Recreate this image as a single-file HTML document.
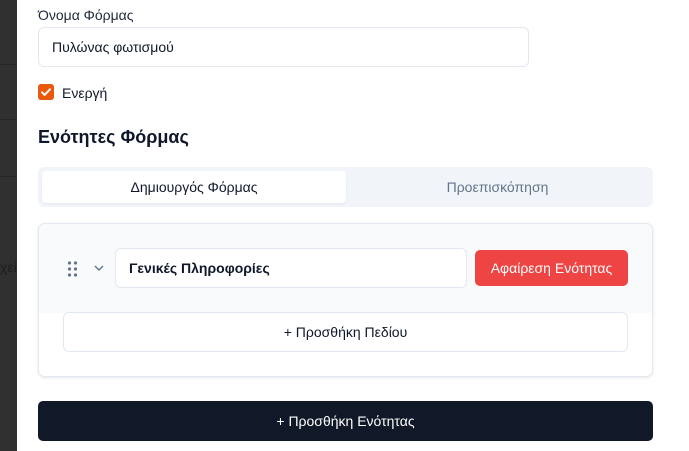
<!DOCTYPE html>
<html><head><meta charset="utf-8"><style>
*{box-sizing:border-box;margin:0;padding:0}
body{width:689px;height:451px;overflow:hidden;background:#fff;font-family:"Liberation Sans","DejaVu Sans",sans-serif;color:#0f172a;position:relative}
.strip{position:absolute;left:0;top:0;width:17px;height:451px;background:#303030}
.strip i{position:absolute;left:0;width:17px;height:1px;background:#262626}
.a{position:absolute}
.inp{border:1px solid #e2e8f0;border-radius:6px;background:#fff;font-size:14px;display:flex;align-items:center}
</style></head><body>
<div class="strip"><i style="top:64px"></i><i style="top:119px"></i><i style="top:176px"></i></div>
<div class="a" style="left:0;top:259px;font-size:14px;color:#1e1e1e">χεί</div>
<div class="a" style="left:38px;top:7px;font-size:14px;color:#1e293b">Όνομα Φόρμας</div>
<div class="a inp" style="left:38px;top:27px;width:491px;height:40px;padding-left:13px">Πυλώνας φωτισμού</div>
<div class="a" style="left:38px;top:84px;width:16px;height:16px;background:#ea580c;border-radius:3px">
<svg width="16" height="16" viewBox="0 0 16 16"><path d="M4 8.3l2.6 2.6L12 5.3" fill="none" stroke="#fff" stroke-width="2" stroke-linecap="round" stroke-linejoin="round"/></svg></div>
<div class="a" style="left:62px;top:85px;font-size:14px">Ενεργή</div>
<div class="a" style="left:38px;top:127px;font-size:18px;font-weight:bold">Ενότητες Φόρμας</div>
<div class="a" style="left:38px;top:167px;width:615px;height:40px;background:#f1f5f9;border-radius:6px"></div>
<div class="a" style="left:42px;top:171px;width:304px;height:32px;background:#fff;border-radius:4px;box-shadow:0 1px 2px rgba(0,0,0,.06);font-size:14px;display:flex;align-items:center;justify-content:center">Δημιουργός Φόρμας</div>
<div class="a" style="left:346px;top:171px;width:303px;height:32px;font-size:14px;color:#64748b;display:flex;align-items:center;justify-content:center">Προεπισκόπηση</div>
<div class="a" style="left:38px;top:223px;width:615px;height:154px;border:1px solid #e2e8f0;border-radius:7px;background:#fff;box-shadow:0 1px 3px rgba(0,0,0,.1);overflow:hidden">
<div style="height:89px;background:#f8fafc"></div></div>
<svg class="a" style="left:66px;top:260px" width="14" height="18" viewBox="0 0 14 18"><g fill="#64748b"><circle cx="3.5" cy="3" r="1.6"/><circle cx="9.5" cy="3" r="1.6"/><circle cx="3.5" cy="9" r="1.6"/><circle cx="9.5" cy="9" r="1.6"/><circle cx="3.5" cy="15" r="1.6"/><circle cx="9.5" cy="15" r="1.6"/></g></svg>
<svg class="a" style="left:93px;top:263px" width="12" height="10" viewBox="0 0 12 10"><path d="M2 3l4 4 4-4" fill="none" stroke="#64748b" stroke-width="1.4"/></svg>
<div class="a inp" style="left:115px;top:248px;width:352px;height:40px;padding-left:13px;font-weight:bold">Γενικές Πληροφορίες</div>
<div class="a" style="left:475px;top:250px;width:153px;height:36px;background:#ef4444;border-radius:5px;color:#fff;font-size:14px;display:flex;align-items:center;justify-content:center">Αφαίρεση Ενότητας</div>
<div class="a inp" style="left:63px;top:312px;width:565px;height:40px;justify-content:center">+ Προσθήκη Πεδίου</div>
<div class="a" style="left:38px;top:401px;width:615px;height:40px;background:#111827;border-radius:5px;color:#fff;font-size:14px;display:flex;align-items:center;justify-content:center">+ Προσθήκη Ενότητας</div>
</body></html>
